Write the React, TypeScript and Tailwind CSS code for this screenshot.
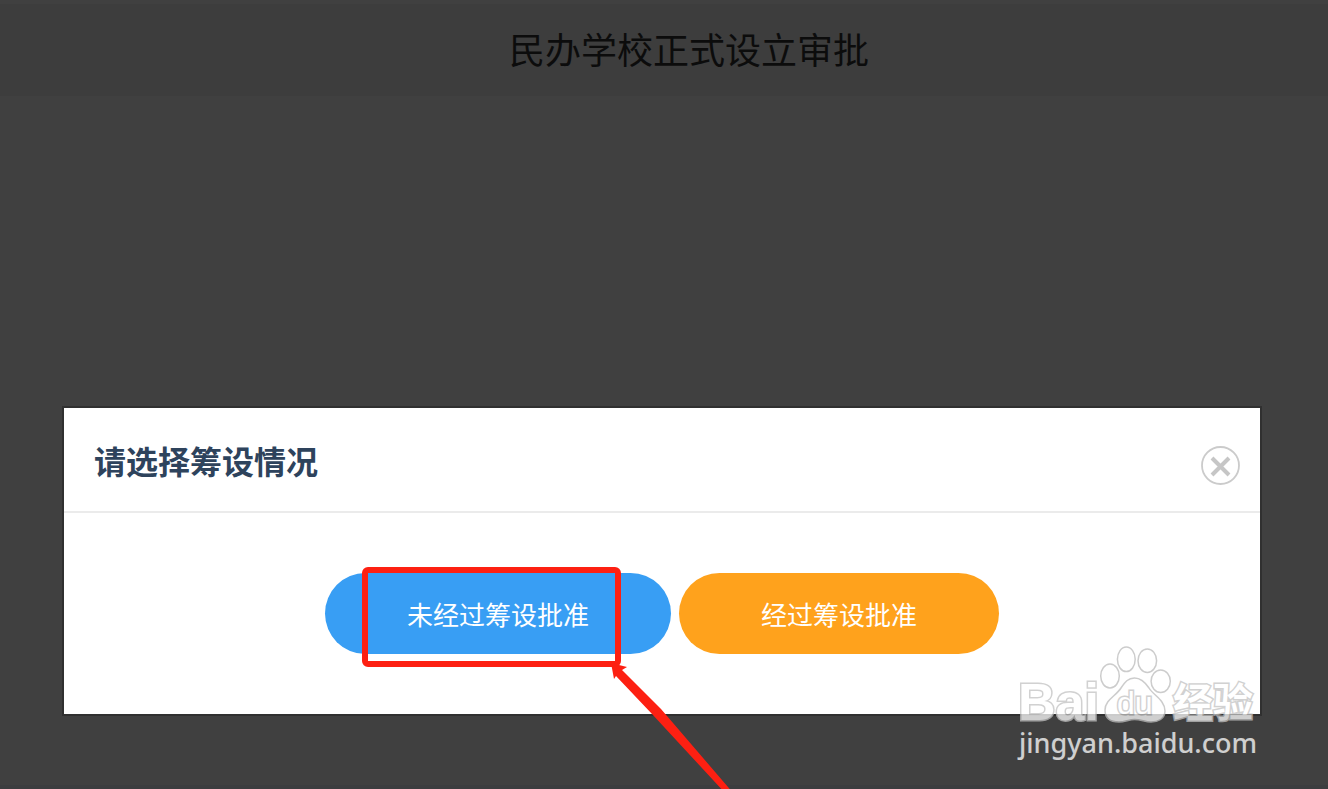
import React from "react";

function CloseIcon() {
  return (
    <svg viewBox="0 0 40 40" className="size-10" fill="none" aria-hidden="true">
      <circle cx="20.5" cy="19.5" r="18.5" stroke="#cbcbcb" strokeWidth="1.8" />
      <path d="M12 12 L29 29 M29 12 L12 29" stroke="#c6c6c6" strokeWidth="4" />
    </svg>
  );
}

function Arrow() {
  return (
    <svg
      viewBox="0 0 124 134"
      className="pointer-events-none absolute -right-16 top-[90px] h-[134px] w-[124px]"
      aria-hidden="true"
    >
      <path d="M0 0 L16 4 L11 7 L50 46 L123 131 L115 131 L41 51 L5 13 L3 16 Z" fill="#fd2012" />
    </svg>
  );
}

function Watermark() {
  return (
    <svg
      viewBox="0 0 250 130"
      className="pointer-events-none absolute -right-1 -bottom-[56px] h-[130px] w-[250px] opacity-75"
      aria-hidden="true"
    >
      <g fill="#fff" stroke="#bcbcbc" strokeWidth="1.5">
        <ellipse cx="96" cy="36" rx="9.3" ry="12" />
        <ellipse cx="112.3" cy="19.3" rx="8.9" ry="12.3" />
        <ellipse cx="133.3" cy="20.7" rx="9.3" ry="11.8" />
        <ellipse cx="146.7" cy="41.3" rx="9.6" ry="11.3" />
        <path d="M120.500 38 C127 38 131 42 135 48 C139 55 151 60 151 71 C151 79 144 82 137 82 C131 82 127 79.500 120.500 79.500 C115 79.500 111 82 105 82 C97 82 91 79 91 70 C91 60 102 56 107 48 C111 42 114 38 120.500 38 Z" />
      </g>
      <g strokeWidth="3" paintOrder="stroke" fontWeight="700" stroke="#c2c2c2" fill="#fff">
        <text x="4" y="80" fontSize="52" fontFamily="Liberation Sans, sans-serif">Bai</text>
        <text x="103" y="74" fontSize="32" fontWeight="400" fontFamily="Liberation Sans, sans-serif">du</text>
        <text x="159" y="77" fontSize="40" fontFamily="Noto Sans CJK SC, sans-serif">经验</text>
      </g>
      <text x="5" y="113" fontSize="27" fontWeight="500" fill="#fff" fontFamily="Noto Sans, sans-serif">
        jingyan.baidu.com
      </text>
    </svg>
  );
}

function ChoiceButton({ label, color }: { label: string; color: string }) {
  return (
    <button type="button" className={`h-[81px] rounded-full px-[82px] text-[26px] leading-9 text-white ${color}`}>
      {label}
    </button>
  );
}

export default function App() {
  return (
    <div className="flex min-h-screen flex-col overflow-hidden bg-[#404040] font-['Noto_Sans_CJK_SC',sans-serif]">
      <header className="mt-1 flex h-[92px] items-center justify-center bg-[#3d3d3d] pb-1 pl-[50px]">
        <h1 className="text-4xl font-normal text-[#0c0c0c]">民办学校正式设立审批</h1>
      </header>
      <main className="mt-[310px] mr-[66px] ml-[62px]">
        <section role="dialog" aria-labelledby="dialog-title" className="relative border-2 border-[#303030] bg-white">
          <div className="flex h-[105px] items-center justify-between border-b-2 border-[#ebebeb] pr-5 pl-[30px]">
            <h2 id="dialog-title" className="text-[32px] leading-10 font-bold text-[#2e435c]">请选择筹设情况</h2>
            <button type="button" aria-label="关闭" className="mt-3">
              <CloseIcon />
            </button>
          </div>
          <div className="flex justify-center gap-2 py-[60px]">
            <div className="relative">
              <ChoiceButton label="未经过筹设批准" color="bg-[#389ef4]" />
              <div className="pointer-events-none absolute -top-1.5 left-[37px] h-[100px] w-[259px] rounded-md border-6 border-[#fd2012]" />
              <Arrow />
            </div>
            <ChoiceButton label="经过筹设批准" color="bg-[#ffa21c]" />
          </div>
          <Watermark />
        </section>
      </main>
      <div className="mt-auto h-1 bg-[#3c3d3f]" />
    </div>
  );
}
